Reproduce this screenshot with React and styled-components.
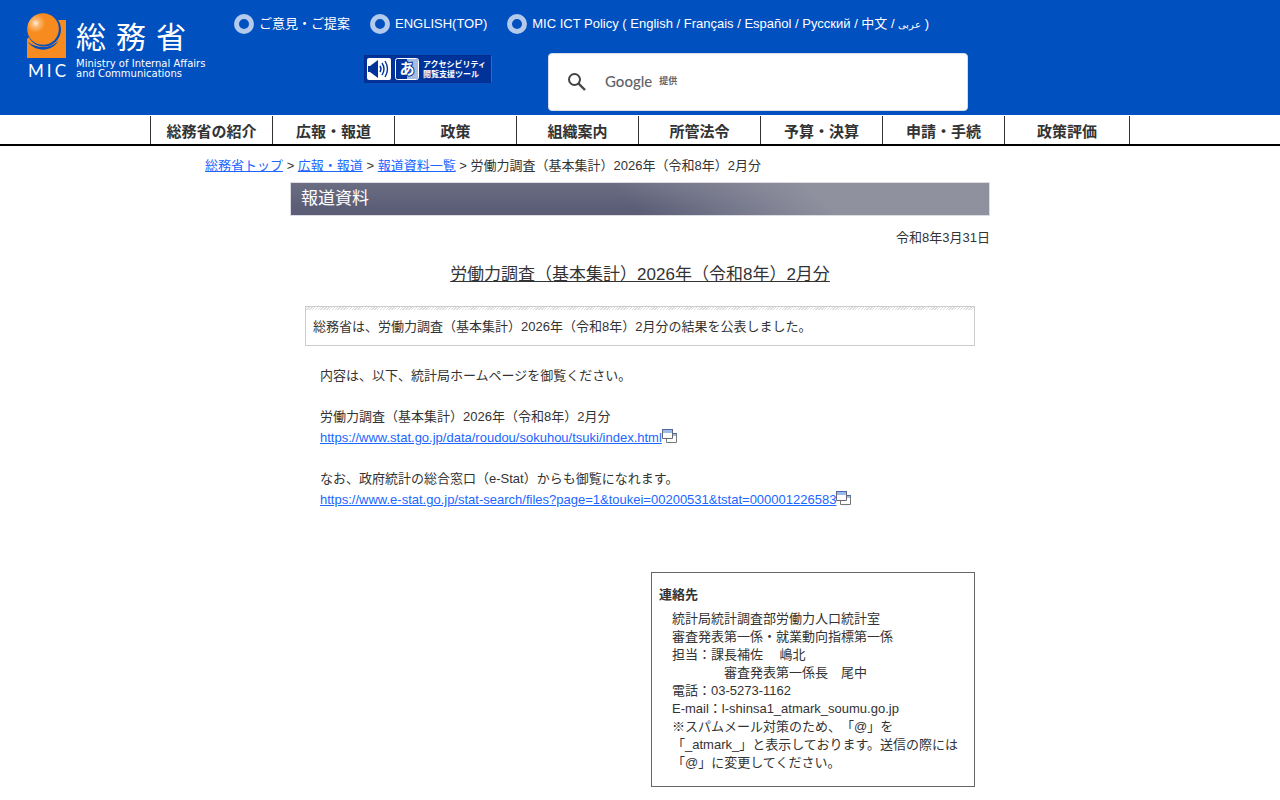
import React from "react";
import styled, { createGlobalStyle } from "styled-components";

const GlobalStyle = createGlobalStyle`
  body {
    margin: 0;
    background: #fff;
    color: #333;
    font-family: "Liberation Sans", "Noto Sans CJK JP", sans-serif;
    font-size: 13px;
    line-height: 18px;
    text-spacing-trim: space-all;
  }
  a {
    color: #1a66ff;
  }
`;

const Header = styled.header`
  display: flex;
  box-sizing: border-box;
  min-height: 115px;
  padding: 13px 27px 4px;
  background: #0050c0;
`;

const Logo = styled.a`
  display: flex;
  flex: none;
  gap: 9px;
  width: 207px;
  color: #fff;
  text-decoration: none;
`;

const Mark = styled.span`
  display: flex;
  flex-direction: column;
  gap: 4px;
  width: 40px;
`;

const MarkLetters = styled.span`
  display: flex;
  justify-content: space-between;
  padding: 0 1px;
  font-family: Lato, sans-serif;
  font-size: 17px;
  line-height: 17px;
`;

const LogoName = styled.span`
  display: flex;
  gap: 10px;
  margin-top: 10px;
  font-size: 30px;
  line-height: 30px;
`;

const LogoSub = styled.span`
  display: block;
  margin-top: 6px;
  font-family: "DejaVu Sans", sans-serif;
  font-size: 10px;
  line-height: 10px;
  white-space: nowrap;
`;

const HeaderMain = styled.div`
  flex: 1;
  min-width: 0;
`;

const TopLinks = styled.ul`
  display: flex;
  flex-wrap: wrap;
  gap: 0 20px;
  margin: 1px 0 0;
  padding: 0;
  list-style: none;
`;

const TopItem = styled.li`
  display: flex;
  align-items: center;
  gap: 5px;
  color: #fff;
  line-height: 20px;

  &::before {
    content: "";
    box-sizing: border-box;
    width: 20px;
    height: 20px;
    border: 5px solid #b3caec;
    border-radius: 50%;
  }

  a {
    color: #fff;
    text-decoration: none;
  }

  a[lang="ar"] {
    font-size: 10px;
    line-height: 10px;
  }
`;

const Tools = styled.div`
  display: flex;
  align-items: flex-start;
  gap: 56px;
  margin: 19px 0 0 130px;
`;

const AccessButton = styled.button`
  display: flex;
  flex: none;
  align-items: center;
  gap: 4px;
  box-sizing: border-box;
  width: 128px;
  height: 28px;
  margin-top: 2px;
  padding: 0 2px;
  border: 1px solid #0a2c8c;
  border-right-color: #3d63c4;
  background: #003399;
  color: #fff;
  font: bold 8px/10px "Noto Sans CJK JP", sans-serif;
  text-align: left;
  white-space: nowrap;
`;

const AccessLine = styled.span`
  display: block;
`;

const Search = styled.form`
  position: relative;
  display: flex;
  align-items: center;
  flex: 0 1 420px;
  box-sizing: border-box;
  height: 58px;
  border: 1px solid #d9dde3;
  border-radius: 4px;
  background: #fff;
`;

const SearchButton = styled.button`
  display: flex;
  flex: none;
  margin-left: 15px;
  padding: 0;
  border: 0;
  background: none;
`;

const SearchInput = styled.input`
  flex: 1;
  min-width: 0;
  height: 40px;
  margin: 0 12px;
  border: 0;
  background: none;
  font-size: 16px;
  outline: none;
`;

const Watermark = styled.label`
  position: absolute;
  left: 56px;
  display: flex;
  align-items: center;
  gap: 7px;
  padding-bottom: 3px;
  color: #5f6368;
  font: 500 15px/20px Lato, sans-serif;

  small {
    font: bold 9px/20px "Noto Sans CJK JP", sans-serif;
  }
`;

const Nav = styled.nav`
  padding-top: 1px;
  border-bottom: 2px solid #000;
`;

const NavList = styled.ul`
  display: grid;
  grid-template-columns: repeat(7, 122fr) 125fr;
  box-sizing: border-box;
  max-width: 980px;
  margin: 0 auto;
  padding: 0;
  border-right: 1px solid #333;
  list-style: none;
`;

const NavItem = styled.li`
  border-left: 1px solid #333;
  text-align: center;

  a {
    display: block;
    padding-top: 4px;
    color: #333;
    font-size: 15px;
    font-weight: bold;
    line-height: 24px;
    text-decoration: none;
  }
`;

const Breadcrumb = styled.nav`
  max-width: 870px;
  margin: 11px auto 0;
`;

const Main = styled.main`
  max-width: 700px;
  margin: 7px auto 0;
`;

const Banner = styled.h1`
  margin: 0;
  padding: 0 10px;
  border: 1px solid #dcdce2;
  background:
    linear-gradient(45deg, transparent 48%, #90919f 75%),
    linear-gradient(#6b6e82, #5c5e78 75%);
  color: #fff;
  font-size: 17px;
  font-weight: normal;
  line-height: 32px;
`;

const DateLine = styled.p`
  margin: 13px 0 0;
  text-align: right;
`;

const Title = styled.h2`
  margin: 16px 0 0;
  font-size: 17px;
  font-weight: normal;
  line-height: 24px;
  text-align: center;
  text-decoration: underline;
`;

const Summary = styled.p`
  margin: 19px 15px 0;
  padding: 11px 7px 9px;
  border: 1px solid #ccc;
  background: repeating-linear-gradient(135deg, #ddd 0 1px, #fff 1px 2px) top / 100% 3px no-repeat;
`;

const Body = styled.div`
  margin: 19px 30px 0;
  line-height: 21px;

  p {
    margin: 0 0 20px;
  }
`;

const Contact = styled.section`
  box-sizing: border-box;
  width: 324px;
  margin: 62px 15px 13px auto;
  padding: 13px 7px 14px;
  border: 1px solid #666;
`;

const ContactTitle = styled.h3`
  margin: 0 0 6px;
  font-size: 13px;
  line-height: 18px;
`;

const ContactText = styled.address`
  padding-left: 13px;
  font-style: normal;
`;

const WindowSvg = styled.svg`
  display: inline-block;
  vertical-align: -1px;
`;

const navItems = [
  "総務省の紹介",
  "広報・報道",
  "政策",
  "組織案内",
  "所管法令",
  "予算・決算",
  "申請・手続",
  "政策評価",
];

const languages = [
  { lang: "en", name: "English" },
  { lang: "fr", name: "Français" },
  { lang: "es", name: "Español" },
  { lang: "ru", name: "Русский" },
  { lang: "zh", name: "中文" },
  { lang: "ar", name: "عربى" },
];

const MicMark = () => (
  <svg width="40" height="45" viewBox="0 0 40 45" aria-hidden="true">
    <defs>
      <radialGradient id="ball" cx="0.27" cy="0.32" r="0.3">
        <stop offset="0" stopColor="#fff0dc" />
        <stop offset="0.4" stopColor="#fbb870" />
        <stop offset="1" stopColor="#f78b1f" />
      </radialGradient>
    </defs>
    <path d="M20 7H39V45H0V26Z" fill="#f78b1f" />
    <circle cx="17" cy="16.5" r="17" fill="#0050c0" />
    <path d="M1 29C8 39 25 40 32 27C25 36 10 36 1 29Z" fill="#0050c0" />
    <circle cx="16" cy="16" r="15.8" fill="url(#ball)" />
  </svg>
);

const SpeakerIcon = () => (
  <svg width="24" height="22" viewBox="0 0 24 22" aria-hidden="true">
    <rect width="24" height="22" rx="2" fill="#fff" />
    <path d="M1 8H3L11 2V20L3 14H1Z" fill="#003399" />
    <path
      d="M13 8Q15 11 13 14M15 5Q19 11 15 17M18 3Q23 11 18 19"
      fill="none"
      stroke="#003399"
      strokeWidth="1.4"
    />
  </svg>
);

const KanaIcon = () => (
  <svg width="24" height="22" viewBox="0 0 24 22" overflow="visible" aria-hidden="true">
    <rect x="0.5" y="0.5" width="23" height="21" rx="2" fill="#003399" stroke="#fff" />
    <path d="M12 1H22Q23 1 23 2V20Q23 21 22 21H12Z" fill="#a9badf" />
    <text
      x="12"
      y="16"
      fill="#fff"
      stroke="#003399"
      strokeWidth="2"
      paintOrder="stroke"
      fontSize="15"
      fontWeight="bold"
      textAnchor="middle"
    >
      あ
    </text>
  </svg>
);

const SearchIcon = () => (
  <svg width="26" height="26" viewBox="0 0 26 26" aria-hidden="true">
    <circle cx="10.5" cy="10.5" r="5.5" fill="none" stroke="#444" strokeWidth="2" />
    <path d="M14.5 14.5L21 21" stroke="#444" strokeWidth="2.4" />
  </svg>
);

const NewWindowIcon = () => (
  <WindowSvg width="15" height="14" viewBox="0 0 15 14" role="img" aria-label="別ウィンドウで開きます">
    <path d="M4.5 4.5H14.5V13.5H4.5Z" fill="#fff" stroke="#777" />
    <path d="M5 5H14V7H5Z" fill="#9dbbe8" />
    <path d="M4 4.5H15" stroke="#4a69a8" />
    <path d="M0.5 0.5H10.5V9.5H0.5Z" fill="#fff" stroke="#667" />
    <path d="M1 1H10V4H1Z" fill="#9dbbe8" />
    <path d="M0 0.5H11" stroke="#4a69a8" />
  </WindowSvg>
);

const App = () => {
  return (
    <>
      <GlobalStyle />
      <Header>
        <Logo href="#">
          <Mark>
            <MicMark />
            <MarkLetters>
              <span>M</span>
              <span>I</span>
              <span>C</span>
            </MarkLetters>
          </Mark>
          <span>
            <LogoName>
              <span>総</span>
              <span>務</span>
              <span>省</span>
            </LogoName>
            <LogoSub>
              Ministry of Internal Affairs
              <br />
              and Communications
            </LogoSub>
          </span>
        </Logo>
        <HeaderMain>
          <TopLinks>
            <TopItem>
              <a href="#">ご意見・ご提案</a>
            </TopItem>
            <TopItem>
              <a href="#">ENGLISH(TOP)</a>
            </TopItem>
            <TopItem>
              <span>
                MIC ICT Policy ({" "}
                {languages.map(({ lang, name }, i) => (
                  <React.Fragment key={lang}>
                    {i > 0 && " / "}
                    <a href="#" lang={lang === "ar" ? lang : undefined}>
                      {name}
                    </a>
                  </React.Fragment>
                ))}{" "}
                )
              </span>
            </TopItem>
          </TopLinks>
          <Tools>
            <AccessButton type="button">
              <SpeakerIcon />
              <KanaIcon />
              <span>
                <AccessLine>アクセシビリティ</AccessLine>
                <AccessLine>閲覧支援ツール</AccessLine>
              </span>
            </AccessButton>
            <Search onSubmit={(e) => e.preventDefault()}>
              <SearchButton type="submit" aria-label="検索">
                <SearchIcon />
              </SearchButton>
              <Watermark htmlFor="search">
                Google <small>提供</small>
              </Watermark>
              <SearchInput id="search" type="text" />
            </Search>
          </Tools>
        </HeaderMain>
      </Header>
      <Nav>
        <NavList>
          {navItems.map((item) => (
            <NavItem key={item}>
              <a href="#">{item}</a>
            </NavItem>
          ))}
        </NavList>
      </Nav>
      <Breadcrumb>
        <a href="#">総務省トップ</a> &gt; <a href="#">広報・報道</a> &gt;{" "}
        <a href="#">報道資料一覧</a> &gt; 労働力調査（基本集計）2026年（令和8年）2月分
      </Breadcrumb>
      <Main>
        <Banner>報道資料</Banner>
        <DateLine>令和8年3月31日</DateLine>
        <Title>労働力調査（基本集計）2026年（令和8年）2月分</Title>
        <Summary>総務省は、労働力調査（基本集計）2026年（令和8年）2月分の結果を公表しました。</Summary>
        <Body>
          <p>内容は、以下、統計局ホームページを御覧ください。</p>
          <p>
            労働力調査（基本集計）2026年（令和8年）2月分
            <br />
            <a href="https://www.stat.go.jp/data/roudou/sokuhou/tsuki/index.html">
              https://www.stat.go.jp/data/roudou/sokuhou/tsuki/index.html
            </a>
            <NewWindowIcon />
          </p>
          <p>
            なお、政府統計の総合窓口（e-Stat）からも御覧になれます。
            <br />
            <a href="https://www.e-stat.go.jp/stat-search/files?page=1&toukei=00200531&tstat=000001226583">
              https://www.e-stat.go.jp/stat-search/files?page=1&amp;toukei=00200531&amp;tstat=000001226583
            </a>
            <NewWindowIcon />
          </p>
        </Body>
        <Contact>
          <ContactTitle>連絡先</ContactTitle>
          <ContactText>
            統計局統計調査部労働力人口統計室
            <br />
            審査発表第一係・就業動向指標第一係
            <br />
            担当：課長補佐　&nbsp;嶋北
            <br />
            {"\u3000\u3000\u3000\u3000審査発表第一係長\u3000尾中"}
            <br />
            電話：03-5273-1162
            <br />
            E-mail：l-shinsa1_atmark_soumu.go.jp
            <br />
            ※スパムメール対策のため、「@」を
            <br />
            「_atmark_」と表示しております。送信の際には
            <br />
            「@」に変更してください。
          </ContactText>
        </Contact>
      </Main>
    </>
  );
};

export default App;
